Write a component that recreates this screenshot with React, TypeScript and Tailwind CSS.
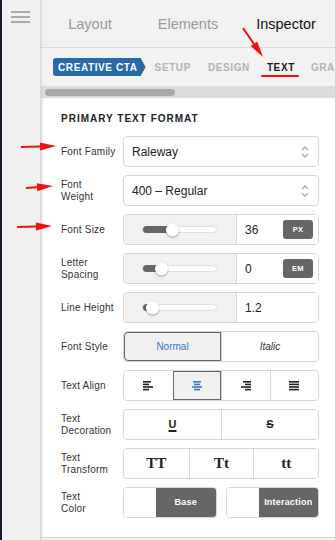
import { ReactNode } from 'react';

const font = { fontFamily: '"Liberation Sans", Arial, sans-serif' };

function Label({ children }: { children: ReactNode }) {
  return <div className="w-[62px] shrink-0 text-[10px] leading-[12px] text-[#333] tracking-[0.2px]">{children}</div>;
}

function Row({ label, children }: { label: ReactNode; children: ReactNode }) {
  return (
    <div className="flex items-center h-[31px]">
      <Label>{label}</Label>
      <div className="flex-1 min-w-0 h-full">{children}</div>
    </div>
  );
}

function Chevrons() {
  return (
    <svg width="8" height="14" viewBox="0 0 8 14" className="text-[#aaa]">
      <path d="M1 5 L4 2 L7 5" fill="none" stroke="currentColor" strokeWidth="1.3" />
      <path d="M1 9 L4 12 L7 9" fill="none" stroke="currentColor" strokeWidth="1.3" />
    </svg>
  );
}

function Select({ value }: { value: string }) {
  return (
    <div className="h-full flex items-center justify-between pl-2 pr-[9px] border border-[#d6d6d6] rounded bg-white">
      <span className="text-[12px] text-[#222]">{value}</span>
      <Chevrons />
    </div>
  );
}

function Slider({ fill, thumb }: { fill: number; thumb: number }) {
  return (
    <div className="relative w-[75px] h-[7px] rounded-full bg-white border border-[#ddd]">
      <div className="absolute left-0 top-[-1px] h-[7px] rounded-full bg-[#666]" style={{ width: fill }} />
      <div
        className="absolute top-1/2 w-[13px] h-[13px] -translate-y-1/2 rounded-full bg-white shadow-[0_1px_2px_rgba(0,0,0,0.35)]"
        style={{ left: thumb - 6 }}
      />
    </div>
  );
}

function SliderInput({ value, unit, fill, thumb }: { value: string; unit?: string; fill: number; thumb: number }) {
  return (
    <div className="h-full flex border border-[#d6d6d6] rounded overflow-hidden">
      <div className="w-[113px] bg-[#f1f1f1] flex items-center pl-[18px] border-r border-[#d6d6d6]">
        <Slider fill={fill} thumb={thumb} />
      </div>
      <div className="flex-1 bg-white flex items-center justify-between pl-2 pr-[5px]">
        <span className="text-[12px] text-[#222]">{value}</span>
        {unit && (
          <span className="w-[30px] h-[19px] rounded-[3px] bg-[#666] text-white text-[7.5px] font-bold flex items-center justify-center tracking-[0.3px]">
            {unit}
          </span>
        )}
      </div>
    </div>
  );
}

function Segments({ items, active, cols }: { items: ReactNode[]; active?: number; cols: string }) {
  return (
    <div className={`h-full grid ${cols} border border-[#d6d6d6] rounded`}>
      {items.map((it, i) => (
        <div
          key={i}
          className={`flex items-center justify-center ${i > 0 ? 'border-l border-[#d6d6d6]' : ''} ${
            i === active ? 'bg-[#f0f0f0] outline outline-1 outline-[#666] -outline-offset-1' : 'bg-white'
          } ${i === 0 ? 'rounded-l' : ''} ${i === items.length - 1 ? 'rounded-r' : ''}`}
        >
          {it}
        </div>
      ))}
    </div>
  );
}

function AlignIcon({ kind, color }: { kind: 'left' | 'center' | 'right' | 'justify'; color: string }) {
  const widths = [8, 6, 10, 6];
  return (
    <svg width="10" height="10" viewBox="0 0 10 10">
      {widths.map((rw, i) => {
        const w = kind === 'justify' ? 10 : rw;
        const x = kind === 'left' || kind === 'justify' ? 0 : kind === 'right' ? 10 - w : (10 - w) / 2;
        return <rect key={i} x={x} y={i * 2.6} width={w} height="1.6" fill={color} />;
      })}
    </svg>
  );
}

function ColorButton({ label }: { label: string }) {
  return (
    <div className="flex-1 h-full flex border border-[#d6d6d6] rounded overflow-hidden">
      <div className="w-[32px] bg-white" />
      <div className="flex-1 bg-[#666] flex items-center justify-center text-white text-[9px] font-bold tracking-[0.2px]">
        {label}
      </div>
    </div>
  );
}

function RedArrow({ x1, y1, x2, y2 }: { x1: number; y1: number; x2: number; y2: number }) {
  const ang = Math.atan2(y2 - y1, x2 - x1);
  const hl = 16;
  const hw = 4;
  const bx = x2 - hl * Math.cos(ang);
  const by = y2 - hl * Math.sin(ang);
  const px = -Math.sin(ang) * hw;
  const py = Math.cos(ang) * hw;
  return (
    <g fill="#f01010">
      <line x1={x1} y1={y1} x2={bx} y2={by} stroke="#f01010" strokeWidth="2" />
      <polygon points={`${x2},${y2} ${bx + px},${by + py} ${bx - px},${by - py}`} />
    </g>
  );
}

export default function App() {
  return (
    <div className="relative w-[335px] h-[540px] flex bg-[#f0f0f0] overflow-hidden" style={font}>
      <div className="w-[41px] shrink-0 h-full bg-[#f0f0f0] border-l-2 border-[#1a1a2e] border-r border-r-[#d8d8d8] shadow-[1px_0_2px_rgba(0,0,0,0.08)] z-10">
        <div className="pt-[11px] pl-[9px] flex flex-col gap-[3px]">
          <div className="w-[19px] h-[2px] bg-[#aaa]" />
          <div className="w-[19px] h-[2px] bg-[#aaa]" />
          <div className="w-[19px] h-[2px] bg-[#aaa]" />
        </div>
      </div>

      <div className="flex-1 min-w-0 flex flex-col">
        <div className="h-[48px] grid grid-cols-3 items-center text-center text-[14.5px] border-b border-[#dcdcdc] bg-[#f1f1f1] pt-[2px]">
          <span className="text-[#9a9a9a]">Layout</span>
          <span className="text-[#9a9a9a]">Elements</span>
          <span className="text-[#111]">Inspector</span>
        </div>

        <div className="h-[38px] flex items-center pl-3 bg-[#f2f2f2] whitespace-nowrap overflow-hidden text-[10px] font-bold tracking-[0.6px]">
          <div className="flex items-center h-[18px] shrink-0">
            <div className="h-full bg-[#2a68a8] rounded-l-[3px] pl-[5px] pr-[3px] flex items-center text-white">CREATIVE CTA</div>
            <div className="h-full w-[5px] bg-[#2a68a8] [clip-path:polygon(0_0,100%_50%,0_100%)]" />
          </div>
          <span className="ml-[9px] text-[#b3b3b3]">SETUP</span>
          <span className="ml-[17px] text-[#b3b3b3]">DESIGN</span>
          <span className="ml-[17px] relative text-[#1a1a1a]">
            TEXT
            <span className="absolute left-[-6px] right-[-4px] top-[15px] h-[2px] rounded-full bg-[#f01010]" />
          </span>
          <span className="ml-[16px] text-[#b3b3b3]">GRAPH</span>
        </div>

        <div className="h-[12px] bg-[#dcdcdc] flex items-center pl-1">
          <div className="w-[130px] h-[7px] rounded-full bg-[#a9a9a9]" />
        </div>

        <div className="flex-1 bg-white pl-5 pr-4 pt-[15px] mb-[2px] border-b border-[#d8d8d8] shadow-[inset_2px_0_2px_rgba(0,0,0,0.06)]">
          <div className="text-[10px] font-bold tracking-[1px] text-[#222] leading-[12px] mb-[11px]">PRIMARY TEXT FORMAT</div>
          <div className="flex flex-col gap-2">
            <Row label="Font Family">
              <Select value="Raleway" />
            </Row>
            <Row label={<>Font<br />Weight</>}>
              <Select value="400 – Regular" />
            </Row>
            <Row label="Font Size">
              <SliderInput value="36" unit="PX" fill={28} thumb={29} />
            </Row>
            <Row label={<>Letter<br />Spacing</>}>
              <SliderInput value="0" unit="EM" fill={17} thumb={18} />
            </Row>
            <Row label="Line Height">
              <SliderInput value="1.2" fill={8} thumb={9} />
            </Row>
            <Row label="Font Style">
              <Segments
                cols="grid-cols-2"
                active={0}
                items={[
                  <span className="text-[10px] text-[#3b7dbd]">Normal</span>,
                  <span className="text-[10px] italic text-[#333]">Italic</span>,
                ]}
              />
            </Row>
            <Row label="Text Align">
              <Segments
                cols="grid-cols-4"
                active={1}
                items={[
                  <AlignIcon kind="left" color="#222" />,
                  <AlignIcon kind="center" color="#3b7dbd" />,
                  <AlignIcon kind="right" color="#222" />,
                  <AlignIcon kind="justify" color="#222" />,
                ]}
              />
            </Row>
            <Row label={<>Text<br />Decoration</>}>
              <Segments
                cols="grid-cols-2"
                items={[
                  <span className="text-[11px] font-bold text-[#222] underline underline-offset-2 decoration-2">U</span>,
                  <span className="text-[11px] font-bold text-[#222] line-through">S</span>,
                ]}
              />
            </Row>
            <Row label={<>Text<br />Transform</>}>
              <Segments
                cols="grid-cols-3"
                items={['TT', 'Tt', 'tt'].map((t) => (
                  <span className="text-[15px] font-bold text-[#222]" style={{ fontFamily: '"Liberation Serif", serif' }}>
                    {t}
                  </span>
                ))}
              />
            </Row>
            <Row label={<>Text<br />Color</>}>
              <div className="h-full flex gap-[9px]">
                <ColorButton label="Base" />
                <ColorButton label="Interaction" />
              </div>
            </Row>
          </div>
        </div>
      </div>

      <svg className="absolute inset-0 pointer-events-none z-20" width="335" height="540">
        <RedArrow x1={243} y1={28} x2={263} y2={57} />
        <RedArrow x1={21} y1={147} x2={56} y2={146} />
        <RedArrow x1={26} y1={188} x2={53} y2={186} />
        <RedArrow x1={17} y1={227} x2={52} y2={226} />
      </svg>
    </div>
  );
}
